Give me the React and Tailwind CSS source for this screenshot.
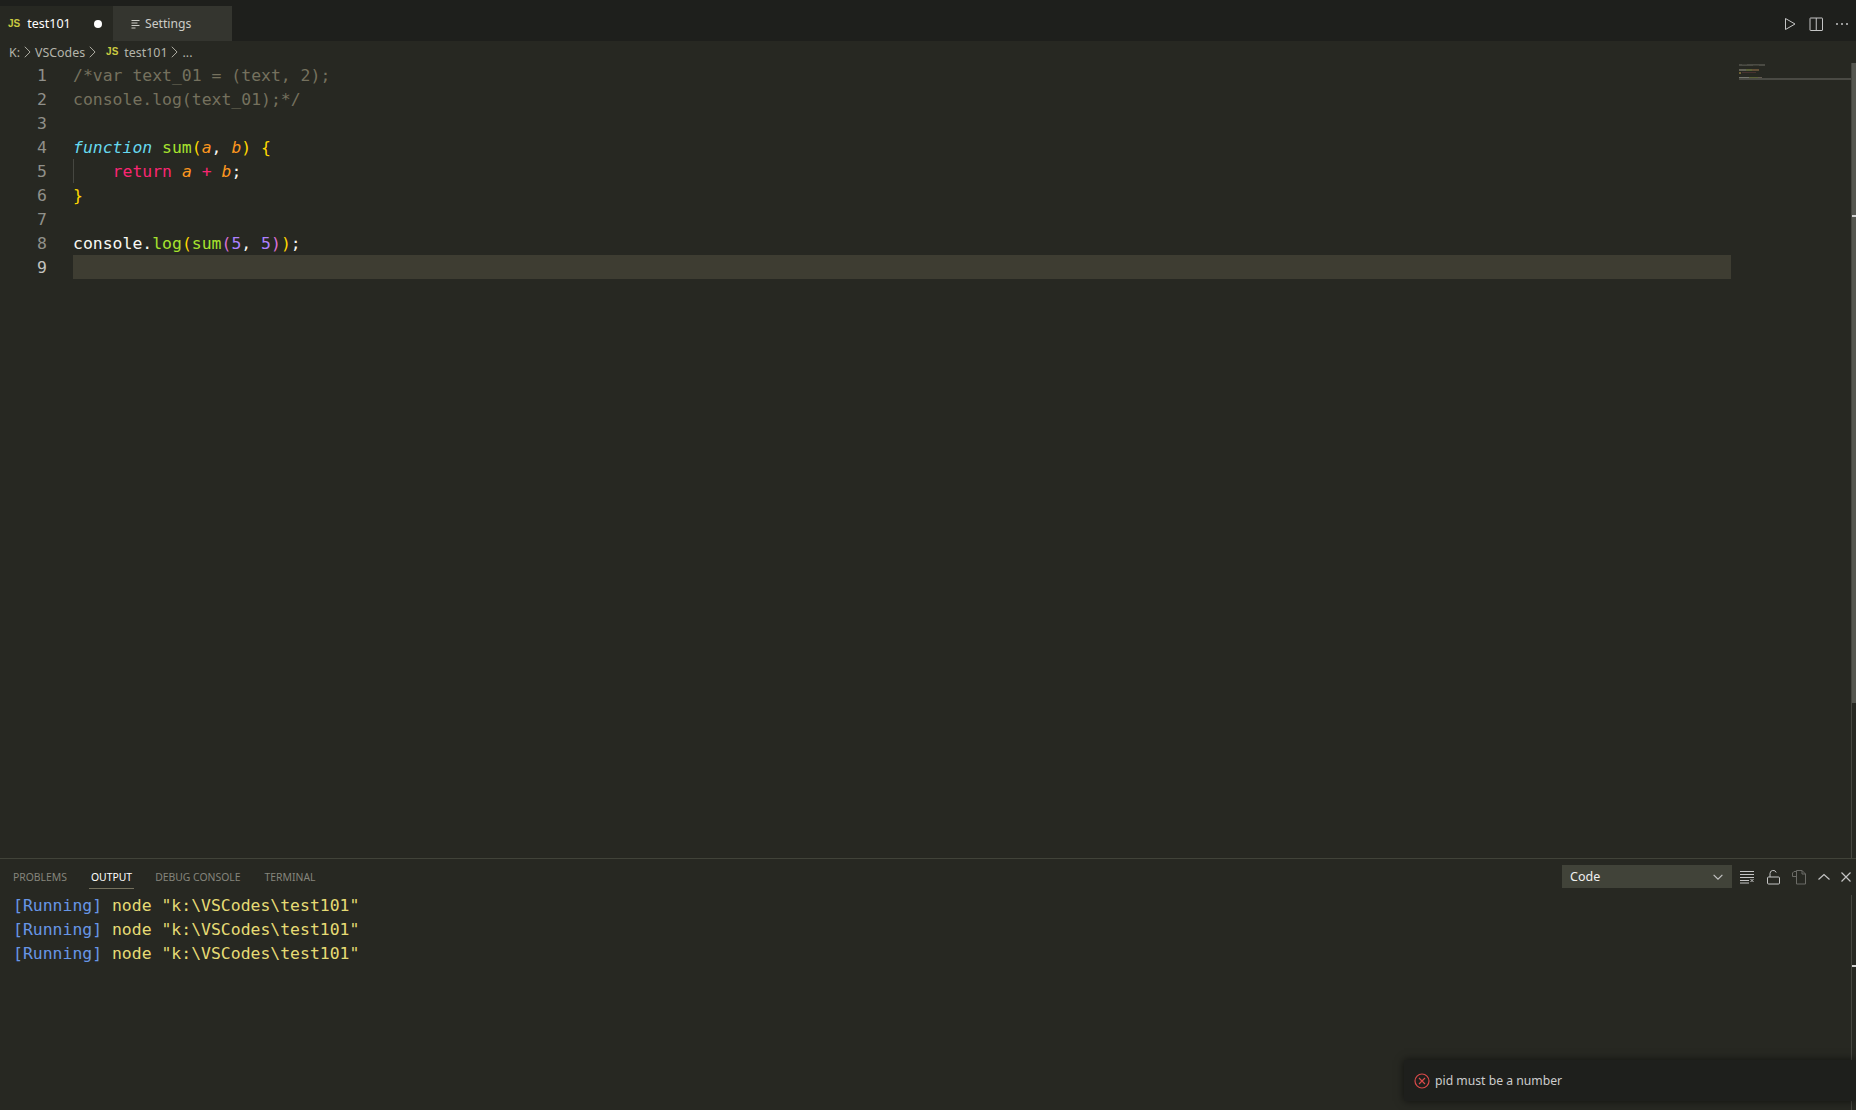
import React from "react";

const MONO = "font-['DejaVu_Sans_Mono','Liberation_Mono',monospace]";

function JsIcon() {
  return <span className="font-['Liberation_Sans',sans-serif] text-[10px] font-bold text-[#cbcb41] leading-none">JS</span>;
}
function Chevron() {
  return (
    <svg width="14" height="14" viewBox="0 0 16 16" fill="none" stroke="#b4b4aa" strokeWidth="1.1" className="shrink-0">
      <path d="M5.500 2 11.500 8l-6 6" />
    </svg>
  );
}

const lines = [
  <span className="text-[#75715e]">{"/*var text_01 = (text, 2);"}</span>,
  <span className="text-[#75715e]">{"console.log(text_01);*/"}</span>,
  null,
  <>
    <span className="text-[#66d9ef] italic">function</span>{" "}
    <span className="text-[#a6e22e]">sum</span>
    <span className="text-[#ffd700]">(</span>
    <span className="text-[#fd971f] italic">a</span>
    <span className="text-[#f8f8f2]">, </span>
    <span className="text-[#fd971f] italic">b</span>
    <span className="text-[#ffd700]">)</span>{" "}
    <span className="text-[#ffd700]">{"{"}</span>
  </>,
  <>
    {"    "}
    <span className="text-[#f92672]">return</span>{" "}
    <span className="text-[#fd971f] italic">a</span>{" "}
    <span className="text-[#f92672]">+</span>{" "}
    <span className="text-[#fd971f] italic">b</span>
    <span className="text-[#f8f8f2]">;</span>
  </>,
  <span className="text-[#ffd700]">{"}"}</span>,
  null,
  <>
    <span className="text-[#f8f8f2]">console.</span>
    <span className="text-[#a6e22e]">log</span>
    <span className="text-[#ffd700]">(</span>
    <span className="text-[#a6e22e]">sum</span>
    <span className="text-[#da70d6]">(</span>
    <span className="text-[#ae81ff]">5</span>
    <span className="text-[#f8f8f2]">, </span>
    <span className="text-[#ae81ff]">5</span>
    <span className="text-[#da70d6]">)</span>
    <span className="text-[#ffd700]">)</span>
    <span className="text-[#f8f8f2]">;</span>
  </>,
  null,
];

function OutputLine() {
  return (
    <div className="h-6 leading-[22px] whitespace-pre">
      <span className="text-[#6796e6]">[Running]</span>
      <span className="text-[#e6db74]"> node "k:\VSCodes\test101"</span>
    </div>
  );
}

function Minimap() {
  return (
    <svg width="30" height="17" viewBox="0 0 30 17" className="absolute left-[8px] top-0">
      <g opacity="0.6">
        <path d="M0 1h26v2H0z" fill="#62625a" />
        <path d="M3 1h5v1H3zM14 2h6v1h-6z" fill="#4b4b42" />
        <path d="M0 6h7v2H0z" fill="#8a8a7a" />
        <path d="M7 6h6v2H7z" fill="#7f8a48" />
        <path d="M13 6h7v2h-7z" fill="#8a6a45" />
        <path d="M0 9h2v2H0z" fill="#a08a40" />
        <path d="M3 9h14v1H3z" fill="#5d3a3a" />
        <path d="M0 14h10v2H0z" fill="#a8a8a0" />
        <path d="M10 14h9v2h-9z" fill="#7f8a48" />
        <path d="M19 14h4v2h-4z" fill="#8a7a70" />
      </g>
    </svg>
  );
}

export default function App() {
  return (
    <div className="w-[1856px] h-[1110px] overflow-hidden flex flex-col bg-[#272822] font-['Noto_Sans','Open_Sans',sans-serif] relative">
      {/* Tab strip */}
      <div className="h-[41px] shrink-0 bg-[#1e1f1c] flex items-end justify-between">
        <div className="flex h-[35px]">
          <div className="w-[113px] bg-[#272822] flex items-center pl-2 text-[12.5px] text-white">
            <JsIcon />
            <span className="ml-[7px] pt-[2px]">test101</span>
            <span className="ml-auto mr-[11px] w-[8px] h-[8px] rounded-full bg-white" />
          </div>
          <div className="w-[119px] bg-[#34352f] flex items-center pl-[17px] text-[12.2px] text-[#ccccc7]">
            <svg width="12" height="12" viewBox="0 0 12 12" stroke="#ccccc7" strokeWidth="1" className="mr-[3px]">
              <path d="M1.500 2.500h8M1.500 5h6M1.500 7.500h8M1.500 10h4" />
            </svg>
            <span className="pt-[2px]">Settings</span>
          </div>
        </div>
        <div className="flex items-center h-[35px] gap-[10px] pr-[6px]">
          <svg width="16" height="16" viewBox="0 0 16 16" fill="none" stroke="#c5c5c5" strokeWidth="1">
            <path d="M3.500 2.500v11L13 8z" strokeLinejoin="round" />
          </svg>
          <svg width="16" height="16" viewBox="0 0 16 16" fill="none" stroke="#c5c5c5" strokeWidth="1">
            <rect x="2" y="2" width="12.500" height="12.500" rx="0.5" />
            <path d="M8.250 2v12.500" />
          </svg>
          <svg width="16" height="16" viewBox="0 0 16 16" fill="#c5c5c5">
            <circle cx="3" cy="8" r="1" /><circle cx="8" cy="8" r="1" /><circle cx="13" cy="8" r="1" />
          </svg>
        </div>
      </div>

      {/* Breadcrumbs */}
      <div className="h-[22px] shrink-0 flex items-center pl-[9px] text-[12.4px] text-[#b4b4aa]">
        <span className="pt-[2px]">K:</span><Chevron />
        <span className="ml-[1px] pt-[2px]">VSCodes</span><Chevron />
        <span className="ml-[7px] mr-[6px] flex items-center"><JsIcon /></span>
        <span className="pt-[2px]">test101</span><Chevron />
        <span className="ml-[1px] pt-[2px]">...</span>
      </div>

      {/* Editor */}
      <div className="flex-1 min-h-0 relative flex">
        <div className={`w-[73px] shrink-0 ${MONO} text-[16.45px] text-right pr-[26px] text-[#90908a]`}>
          {lines.map((_, i) => (
            <div key={i} className={`h-6 leading-[26px] ${i === 8 ? "text-[#c2c2bf]" : ""}`}>{i + 1}</div>
          ))}
        </div>
        <div className={`w-[1658px] shrink-0 relative ${MONO} text-[16.45px]`}>
          {lines.map((l, i) => (
            <div key={i} className={`h-6 leading-[26px] whitespace-pre ${i === 8 ? "bg-[#3e3d32]" : ""}`}>{l}</div>
          ))}
          <div className="absolute left-0 top-[96px] w-px h-6 bg-[#464741]" />
        </div>
        {/* Minimap */}
        <div className="flex-1 relative">
          <Minimap />
          <div className="absolute left-[8px] right-[5px] top-[15px] h-[2px] bg-[#4a4a44]" />
          <div className="absolute right-0 top-0 bottom-0 w-[5px] border-l border-[#45463f]" />
          <div className="absolute right-0 top-0 w-[4px] h-[640px] bg-[#55564f]" />
          <div className="absolute right-0 top-[152px] w-[4px] h-[2px] bg-[#d0d0d0]" />
        </div>
      </div>

      {/* Panel */}
      <div className="h-[252px] shrink-0 border-t border-[#414339] flex flex-col relative">
        <div className="h-[35px] shrink-0 flex items-center pl-[13px] pr-[2px] text-[10.4px]">
          <div className="flex items-center pt-[2px] h-[35px]">
            <span className="text-[#85857c]">PROBLEMS</span>
            <div className="ml-[24px] relative text-white h-full flex items-center">
              <span>OUTPUT</span>
              <span className="absolute -left-[2px] -right-[2px] bottom-[5px] h-px bg-[#75715e]" />
            </div>
            <span className="ml-[23px] text-[#85857c]">DEBUG CONSOLE</span>
            <span className="ml-[24px] text-[#85857c]">TERMINAL</span>
          </div>
          <div className="ml-auto flex items-center">
            <div className="w-[170px] h-[23px] bg-[#414339] flex items-center justify-between pl-2 pr-[7px] text-[12.5px] text-[#f0f0f0]">
              <span className="pt-[2px]">Code</span>
              <svg width="14" height="14" viewBox="0 0 16 16" fill="none" stroke="#c5c5c5" strokeWidth="1.3">
                <path d="M3 5.500 8 10.500l5-5" />
              </svg>
            </div>
            <svg width="16" height="16" viewBox="0 0 16 16" fill="none" stroke="#c5c5c5" strokeWidth="1" className="ml-[7px]">
              <path d="M1 2.500h14M1 5.500h14M1 8.500h14M1 11.500h9M11.500 10l3 3M14.500 10l-3 3M1 14h9" />
            </svg>
            <svg width="16" height="16" viewBox="0 0 16 16" fill="none" stroke="#c5c5c5" strokeWidth="1" className="ml-[10px]">
              <rect x="2.500" y="8" width="12" height="7" rx="1" />
              <path d="M5 8V4.500a3.200 3.200 0 0 1 6.200-1" />
            </svg>
            <svg width="16" height="16" viewBox="0 0 16 16" fill="none" stroke="#6b6b66" strokeWidth="1" className="ml-[10px]">
              <path d="M5.500 1.500h5.500l3.500 3.500v10h-9zM5.500 2.500H3l-1.500 1.500v3.500h4M11 1.500V5h3.500" />
            </svg>
            <svg width="16" height="16" viewBox="0 0 16 16" fill="none" stroke="#c5c5c5" strokeWidth="1.2" className="ml-[9px]">
              <path d="M2.500 10.500 8 5.500l5.500 5" />
            </svg>
            <svg width="16" height="16" viewBox="0 0 16 16" fill="none" stroke="#c5c5c5" strokeWidth="1.2" className="ml-[6px]">
              <path d="M3.500 3.500l9 9M12.500 3.500l-9 9" />
            </svg>
          </div>
        </div>
        <div className={`pl-[13px] pt-[1px] ${MONO} text-[16.45px]`}>
          <OutputLine /><OutputLine /><OutputLine />
        </div>
        <div className="absolute right-0 top-[36px] bottom-0 w-[5px] border-l border-[#45463f]" />
        <div className="absolute right-0 top-[106px] w-[4px] h-[2px] bg-[#d0d0d0]" />
      </div>

      {/* Notification toast */}
      <div className="absolute left-[1404px] right-0 top-[1060px] h-[41px] bg-[#1e1f1c] shadow-[0_0_8px_rgba(0,0,0,0.6)] flex items-center pl-[10px] text-[12.2px] text-[#cccccc]">
        <svg width="16" height="16" viewBox="0 0 16 16" fill="none" stroke="#d94a4a" strokeWidth="1.2" className="mr-[5px]">
          <circle cx="8" cy="8" r="7" />
          <path d="M5 5l6 6M11 5l-6 6" />
        </svg>
        <span className="pt-[2px]">pid must be a number</span>
      </div>
    </div>
  );
}
